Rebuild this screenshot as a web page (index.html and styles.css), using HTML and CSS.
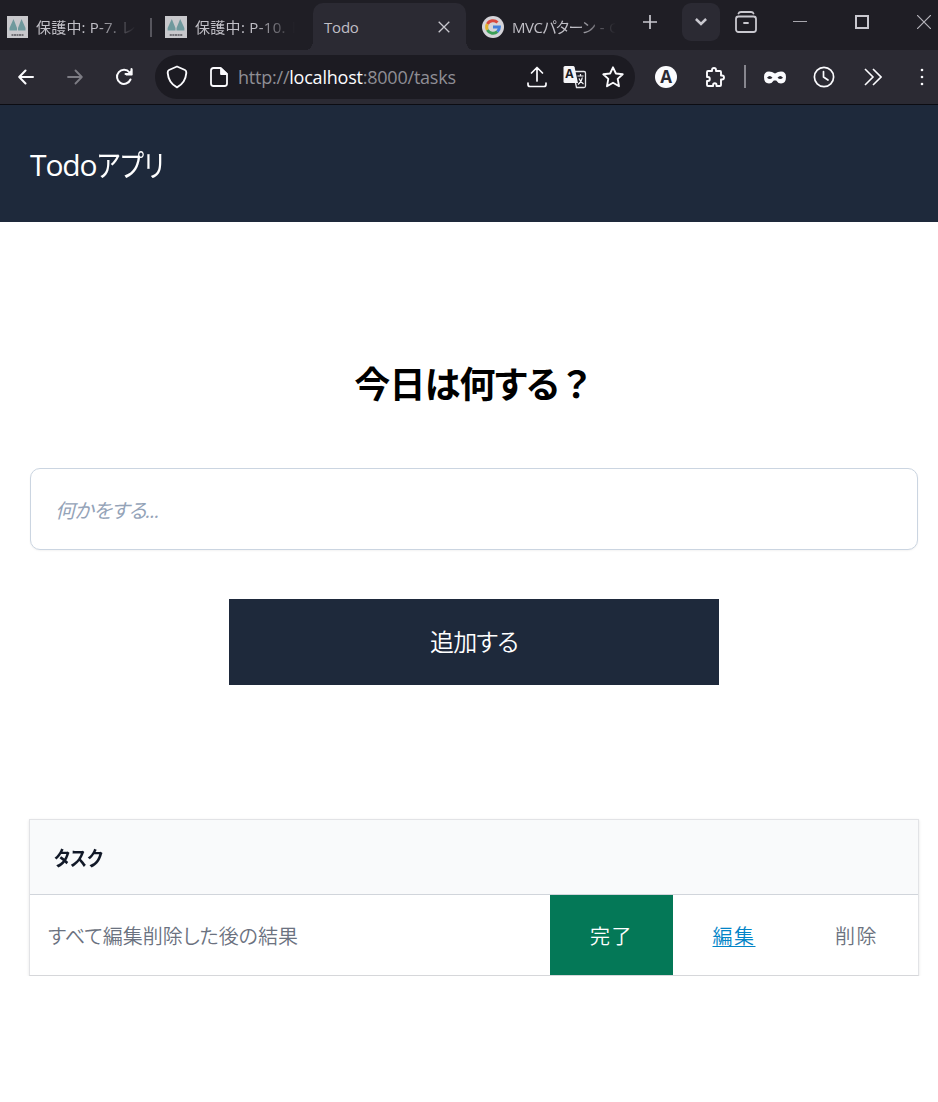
FILE: index.html
```html
<!DOCTYPE html>
<html lang="ja">
<head>
<meta charset="utf-8">
<title>Todo</title>
<link rel="stylesheet" href="styles.css">
</head>
<body>
<div class="tabbar">
  <div class="tab tab-first">
    <svg class="favicon" width="21" height="22" viewBox="0 0 21 22"><path fill="#c8c8cc" d="M0 0h21v22H0z"/><path fill="#6f999d" d="M6.500 3 10 12v2.500H2.500V12zM14.500 3 18.500 12v2.500H11V12z"/><path stroke="#55555c" stroke-width="1.500" stroke-dasharray="2 .5" d="M4.500 19h12"/></svg>
    <span class="tab-title fade">保護中: P-7. レ</span>
  </div>
  <span class="tab-divider"></span>
  <div class="tab tab-second">
    <svg class="favicon" width="22" height="22" viewBox="0 0 21 22" preserveAspectRatio="none"><path fill="#c8c8cc" d="M0 0h21v22H0z"/><path fill="#6f999d" d="M6.500 3 10 12v2.500H2.500V12zM14.500 3 18.500 12v2.500H11V12z"/><path stroke="#55555c" stroke-width="1.500" stroke-dasharray="2 .5" d="M4.500 19h12"/></svg>
    <span class="tab-title fade">保護中: P-10. レ</span>
  </div>
  <div class="tab tab-active">
    <span class="tab-title">Todo</span>
    <svg width="12" height="12" viewBox="0 0 12 12" fill="none" stroke="#c9c8cf" stroke-width="1.300"><path d="m.7.7 10.600 10.600M11.300.7.7 11.300"/></svg>
  </div>
  <div class="tab tab-google">
    <svg class="favicon" width="22" height="22" viewBox="0 0 22 22" fill="none" stroke-width="3"><circle cx="11" cy="11" r="11" fill="#d5d4d9"/><path stroke="#d94a3f" d="M5.400 8A6.400 6.400 0 0 1 15.500 6.500"/><path stroke="#e4b22e" d="M5.400 14a6.400 6.400 0 0 1 0-6"/><path stroke="#3b9f57" d="M15.300 15.700A6.400 6.400 0 0 1 5.400 14"/><path stroke="#4280dc" d="M11 11h6.400a6.400 6.400 0 0 1-2.100 4.700"/></svg>
    <span class="tab-title fade">MVCパターン - G</span>
  </div>
  <div class="controls">
    <svg class="new-tab" width="14" height="14" viewBox="0 0 14 14" stroke="#c9c8cf" stroke-width="1.700"><path d="M7 0v14M0 7h14"/></svg>
    <span class="tab-list"><svg width="12" height="8" viewBox="0 0 12 8" fill="none" stroke="#c9c8cf" stroke-width="2.500"><path d="m.9 1 5.100 5 5.100-5"/></svg></span>
    <svg class="archive" width="22" height="22" viewBox="0 0 22 22" fill="none" stroke="#c9c8cf" stroke-width="1.800" stroke-linecap="round"><path d="M3.500 2.500Q4 1 6 1h10q2 0 2.500 1.500"/><rect x="1" y="5.500" width="20" height="15.500" rx="2.500"/><path d="M9 12h4"/></svg>
    <svg class="minimize" width="14" height="14" viewBox="0 0 14 14" stroke="#a8a7ae"><path d="M0 6.500h14"/></svg>
    <svg class="maximize" width="14" height="14" viewBox="0 0 14 14" fill="none" stroke="#c9c8cf" stroke-width="2"><path d="M1 1h12v12H1z"/></svg>
    <svg class="close" width="14" height="14" viewBox="0 0 14 14" stroke="#b5b4bb" stroke-width="1.200"><path d="m0 0 14 14M14 0 0 14"/></svg>
  </div>
</div>

<div class="toolbar">
  <span class="tool"><svg width="16" height="16" viewBox="0 0 16 16" fill="none" stroke="#fbfbfe" stroke-width="2" stroke-linecap="round" stroke-linejoin="round"><path d="M15 8H1.500M7.500 1.500 1.200 8l6.300 6.500"/></svg></span>
  <span class="tool"><svg width="16" height="16" viewBox="0 0 16 16" fill="none" stroke="#7d7c84" stroke-width="1.800" stroke-linecap="round" stroke-linejoin="round"><path d="M1 8h13.500M8.500 1.500 14.800 8l-6.300 6.500"/></svg></span>
  <span class="tool"><svg width="18" height="18" viewBox="0 0 18 18" fill="none" stroke="#fbfbfe" stroke-width="2"><path d="M15.500 11.500A7 7 0 1 1 14.500 4.500M10.500 6h6V1" stroke-linecap="round"/><path fill="#fbfbfe" stroke="none" d="M17.300 1v6.500h-6.600z"/></svg></span>
  <div class="address">
    <svg class="shield" width="22" height="24" viewBox="0 0 22 24" fill="none" stroke="#fbfbfe" stroke-width="1.900" stroke-linejoin="round"><path d="M11 1.500 19 5Q20.500 5.700 20.300 8 19.500 18 11 22.300 2.500 18 1.700 8 1.500 5.700 3 5z"/></svg>
    <svg class="page-icon" width="18" height="20" viewBox="0 0 18 20" fill="none" stroke="#fbfbfe" stroke-width="1.800" stroke-linejoin="round"><path d="M10.500 1H3.500Q1 1 1 3.500v13Q1 19 3.500 19h11q2.500 0 2.500-2.500V7z"/><path fill="#fbfbfe" d="M11 1.500V7h5.500z"/></svg>
    <span class="url">http://<b>localhost</b>:8000/tasks</span>
    <svg class="share" width="20" height="22" viewBox="0 0 20 22" fill="none" stroke="#fbfbfe" stroke-width="1.700" stroke-linecap="round" stroke-linejoin="round"><path d="M10 15V1.500M4.500 7 10 1.500 15.500 7M1 17v1.500q0 2 2 2h14q2 0 2-2V17"/></svg>
    <svg class="translate" width="24" height="24" viewBox="0 0 24 24"><path fill="#1c1b22" stroke="#e8e8ec" stroke-width="1.300" d="M10 6.500h11q1.500 0 1.500 1.500v13q0 1.500-1.500 1.500h-7.500z"/><path fill="#f4f4f7" d="M2 1h8q1.300 0 1.600 1.300L15 18H2q-1.500 0-1.500-1.500v-14Q.5 1 2 1z"/><path fill="none" stroke="#f4f4f7" stroke-width="1.200" d="M14.500 11h6M17.500 9v2M15 19.500q3.500-2.500 4.300-7M16 13.500q1.500 3.500 4.500 5.500"/><text class="translate-letter" x="6.300" y="13" text-anchor="middle">A</text></svg>
    <svg class="star" width="22" height="22" viewBox="0 0 22 22" fill="none" stroke="#fbfbfe" stroke-width="1.900" stroke-linejoin="round"><path d="m11 1.300 2.900 6.200 6.800.8-5 4.600 1.300 7.300-6-3.500-6 3.500 1.300-7.300-5-4.600 6.800-.8z"/></svg>
  </div>
  <span class="tool tool-after"><span class="account">A</span></span>
  <span class="tool"><svg width="20" height="20" viewBox="0 0 20 20" fill="none" stroke="#fbfbfe" stroke-width="1.900" stroke-linejoin="round"><path d="M3 4h4V3q0-2 2-2t2 2v1h4q1 0 1 1v3.500h1q2 0 2 2t-2 2h-1V18q0 1-1 1h-3.500v-1q0-1.700-1.700-1.700T8.100 18v1H3q-1 0-1-1v-4h1q1.800 0 1.800-2T3 10H2V5q0-1 1-1z"/></svg></span>
  <span class="tool-divider"></span>
  <span class="tool tool-mask"><svg width="22" height="13" viewBox="0 0 22 13"><path fill="#fbfbfe" fill-rule="evenodd" d="M5 .5Q8 .5 11 2.500 14 .5 17 .5q5 0 5 5.500 0 6.500-5 6.500-3 0-4.800-3H9.800q-1.800 3-4.800 3-5 0-5-6.500Q0 .5 5 .5zM3 6.700q2.700 2.700 5.500 0Q5.700 3.200 3 6.700zm10.500 0q2.800 2.700 5.500 0-2.700-3.500-5.500 0z"/></svg></span>
  <span class="tool"><svg width="22" height="22" viewBox="0 0 22 22" fill="none" stroke="#fbfbfe" stroke-width="1.700" stroke-linecap="round" stroke-linejoin="round"><circle cx="11" cy="11" r="9.600"/><path d="M10.500 5.500V11l4.500 3"/></svg></span>
  <span class="tool"><svg width="18" height="18" viewBox="0 0 18 18" fill="none" stroke="#fbfbfe" stroke-width="1.600"><path d="m1 1 8 8-8 8M9 1l8 8-8 8"/></svg></span>
  <span class="tool"><svg width="4" height="18" viewBox="0 0 4 18" fill="#fbfbfe"><circle cx="2" cy="2" r="1.300"/><circle cx="2" cy="9" r="1.300"/><circle cx="2" cy="16" r="1.300"/></svg></span>
</div>

<header class="app-header"><p><span class="app-latin">Todo</span><span class="app-kana">アプリ</span></p></header>

<main class="main">
  <h1 class="question">今日は何する<span class="question-mark">？</span></h1>
  <form class="task-form">
    <input class="task-input" type="text" placeholder="何かをする...">
    <button class="task-add" type="button">追加する</button>
  </form>
  <section class="tasks">
    <div class="tasks-head"><span>タスク</span></div>
    <div class="task-row">
      <span class="task-name">すべて編集削除した後の結果</span>
      <span class="task-done">完了</span>
      <a class="task-edit">編集</a>
      <span class="task-delete">削除</span>
    </div>
  </section>
</main>
</body>
</html>
```
FILE: styles.css
```css
* { box-sizing: border-box; }
body {
  margin: 0;
  background: #fff;
  font-family: "Open Sans", "Noto Sans CJK JP", sans-serif;
  overflow: hidden;
}
svg { display: block; flex: none; }

.tabbar {
  display: flex;
  height: 50px;
  background: #1f1e25;
  color: #c0bfc6;
  font-size: 15px;
}
.tab { display: flex; align-items: center; height: 50px; padding-top: 3px; flex: none; }
.tab-title { white-space: nowrap; line-height: 24px; }
.fade { -webkit-mask-image: linear-gradient(90deg, #000 60%, transparent 98%); mask-image: linear-gradient(90deg, #000 60%, transparent 98%); }
.tab-first { width: 150px; padding-left: 7px; gap: 8px; }
.tab-first .tab-title { width: 102px; letter-spacing: .2px; }
.tab-divider { width: 2px; height: 19px; margin-top: 18px; background: #57565e; }
.tab-second { width: 161px; padding-left: 13px; gap: 8px; }
.tab-second .tab-title { width: 102px; letter-spacing: .3px; }
.tab-active {
  position: relative;
  width: 153px;
  height: 47px;
  margin-top: 3px;
  padding: 0 16px 0 11px;
  justify-content: space-between;
  background: #2b2a33;
  border-radius: 10px 10px 0 0;
}
.tab-active .tab-title { letter-spacing: -.2px; }
.tab-active::before, .tab-active::after {
  content: "";
  position: absolute;
  bottom: 0;
  width: 7px;
  height: 9px;
}
.tab-active::before { left: -7px; background: radial-gradient(ellipse 7px 9px at 0 0, #1f1e25 98%, #2b2a33); }
.tab-active::after { right: -7px; background: radial-gradient(ellipse 7px 9px at 100% 0, #1f1e25 98%, #2b2a33); }
.tab-google { width: 177px; padding-left: 16px; gap: 8px; }
.tab-google .tab-title { width: 106px; font-feature-settings: "palt"; letter-spacing: -.5px; word-spacing: 1.500px; }
.controls { display: flex; align-items: center; height: 44px; }
.tab-list {
  display: flex;
  align-items: center;
  justify-content: center;
  width: 38px;
  height: 38px;
  margin-left: 25px;
  border-radius: 9px;
  background: #2b2a33;
}
.archive { margin-left: 15px; }
.minimize { margin-left: 36px; }
.maximize { margin-left: 48px; }
.close { margin-left: 48px; }

.toolbar {
  display: flex;
  align-items: center;
  height: 55px;
  padding-left: 1.5px;
  background: #2b2a33;
  border-bottom: 1px solid #0c0c12;
}
.tool { display: flex; flex: none; width: 49px; justify-content: center; }
.address {
  display: flex;
  align-items: center;
  flex: none;
  width: 480px;
  height: 44px;
  margin-left: 6.500px;
  padding-left: 11px;
  border-radius: 22px;
  background: #1c1b22;
}
.page-icon { margin-left: 22px; }
.url { width: 289px; margin-left: 10px; color: #8f8e95; font-size: 18px; letter-spacing: -.22px; white-space: nowrap; }
.url b { color: #fbfbfe; font-weight: 400; }
.translate { margin-left: 16px; }
.translate-letter { font: 700 12px "Open Sans", sans-serif; fill: #1c1b22; }
.star { margin-left: 15px; }
.tool-after { margin-left: 6.500px; }
.account {
  width: 22px;
  height: 22px;
  border-radius: 50%;
  background: #fbfbfe;
  color: #2b2a33;
  font-size: 17px;
  font-weight: 700;
  line-height: 22px;
  text-align: center;
}
.tool-divider { flex: none; width: 2px; height: 23px; margin: -2px 0 0 4.500px; background: #87868e; }
.tool-mask { margin-left: 4.500px; }

.app-header {
  display: flex;
  align-items: center;
  height: 117px;
  padding: 0 0 2px 30px;
  background: #1e293b;
  color: #fff;
  font-size: 30px;
}
.app-header p { margin: 0; }
.app-latin { letter-spacing: -1.100px; }
.app-kana {
  display: inline-block;
  font-feature-settings: "palt";
  transform: scaleX(.84);
  transform-origin: left;
}

.main { padding: 136px 20px 0 30px; }
.question {
  margin: 0;
  height: 54px;
  line-height: 54px;
  text-align: center;
  color: #000;
  font-size: 36px;
  font-weight: 700;
  font-feature-settings: "palt";
  letter-spacing: -.8px;
}
.question-mark { font-feature-settings: normal; }
.task-form { display: flex; flex-direction: column; align-items: center; margin-top: 56px; }
.task-input {
  width: 888px;
  height: 82px;
  padding: 2px 26px 0 24px;
  border: 1px solid #cbd5e1;
  border-radius: 10px;
  background: #fff;
  box-shadow: 0 1px 2px rgba(0, 0, 0, .05);
  font: 20px "Open Sans", "Noto Sans CJK JP", sans-serif;
}
.task-input::placeholder { color: #94a3b8; opacity: 1; font-style: italic; font-feature-settings: "palt"; letter-spacing: -.6px; }
.task-add {
  width: 490px;
  height: 86px;
  margin-top: 49px;
  padding: 0 0 3px;
  border: 0;
  background: #1e293b;
  color: #fff;
  font: 24px "Noto Sans CJK JP", sans-serif;
  font-weight: 350;
  font-feature-settings: "palt";
  letter-spacing: -.8px;
}
.tasks {
  width: 890px;
  margin: 134px 0 0 -1px;
  border: 1px solid #e2e3e6;
  border-bottom-color: #d6d7da;
  box-shadow: 0 1px 3px rgba(0, 0, 0, .1);
  font-size: 20px;
}
.tasks-head {
  display: flex;
  align-items: center;
  height: 75px;
  padding-left: 24px;
  border-bottom: 1px solid #d1d5db;
  background: #f9fafb;
  color: #111827;
  font-weight: 700;
  font-feature-settings: "palt";
}
.tasks-head span { transform: scaleX(.89); transform-origin: left; }
.task-row { display: grid; grid-template-columns: 520px 123px 122px 123px; height: 80px; line-height: 80px; color: #6b7280; font-weight: 350; }
.task-row > * { height: 80px; padding-top: 2px; }
.task-row .task-name { padding-left: 18px; font-feature-settings: "palt"; }
.task-done, .task-edit, .task-delete { text-align: center; letter-spacing: 1.500px; }
.task-done { background: #047857; color: #fff; }
.task-edit { color: #0284c7; text-decoration: underline 1px; text-underline-offset: 2px; }
```
